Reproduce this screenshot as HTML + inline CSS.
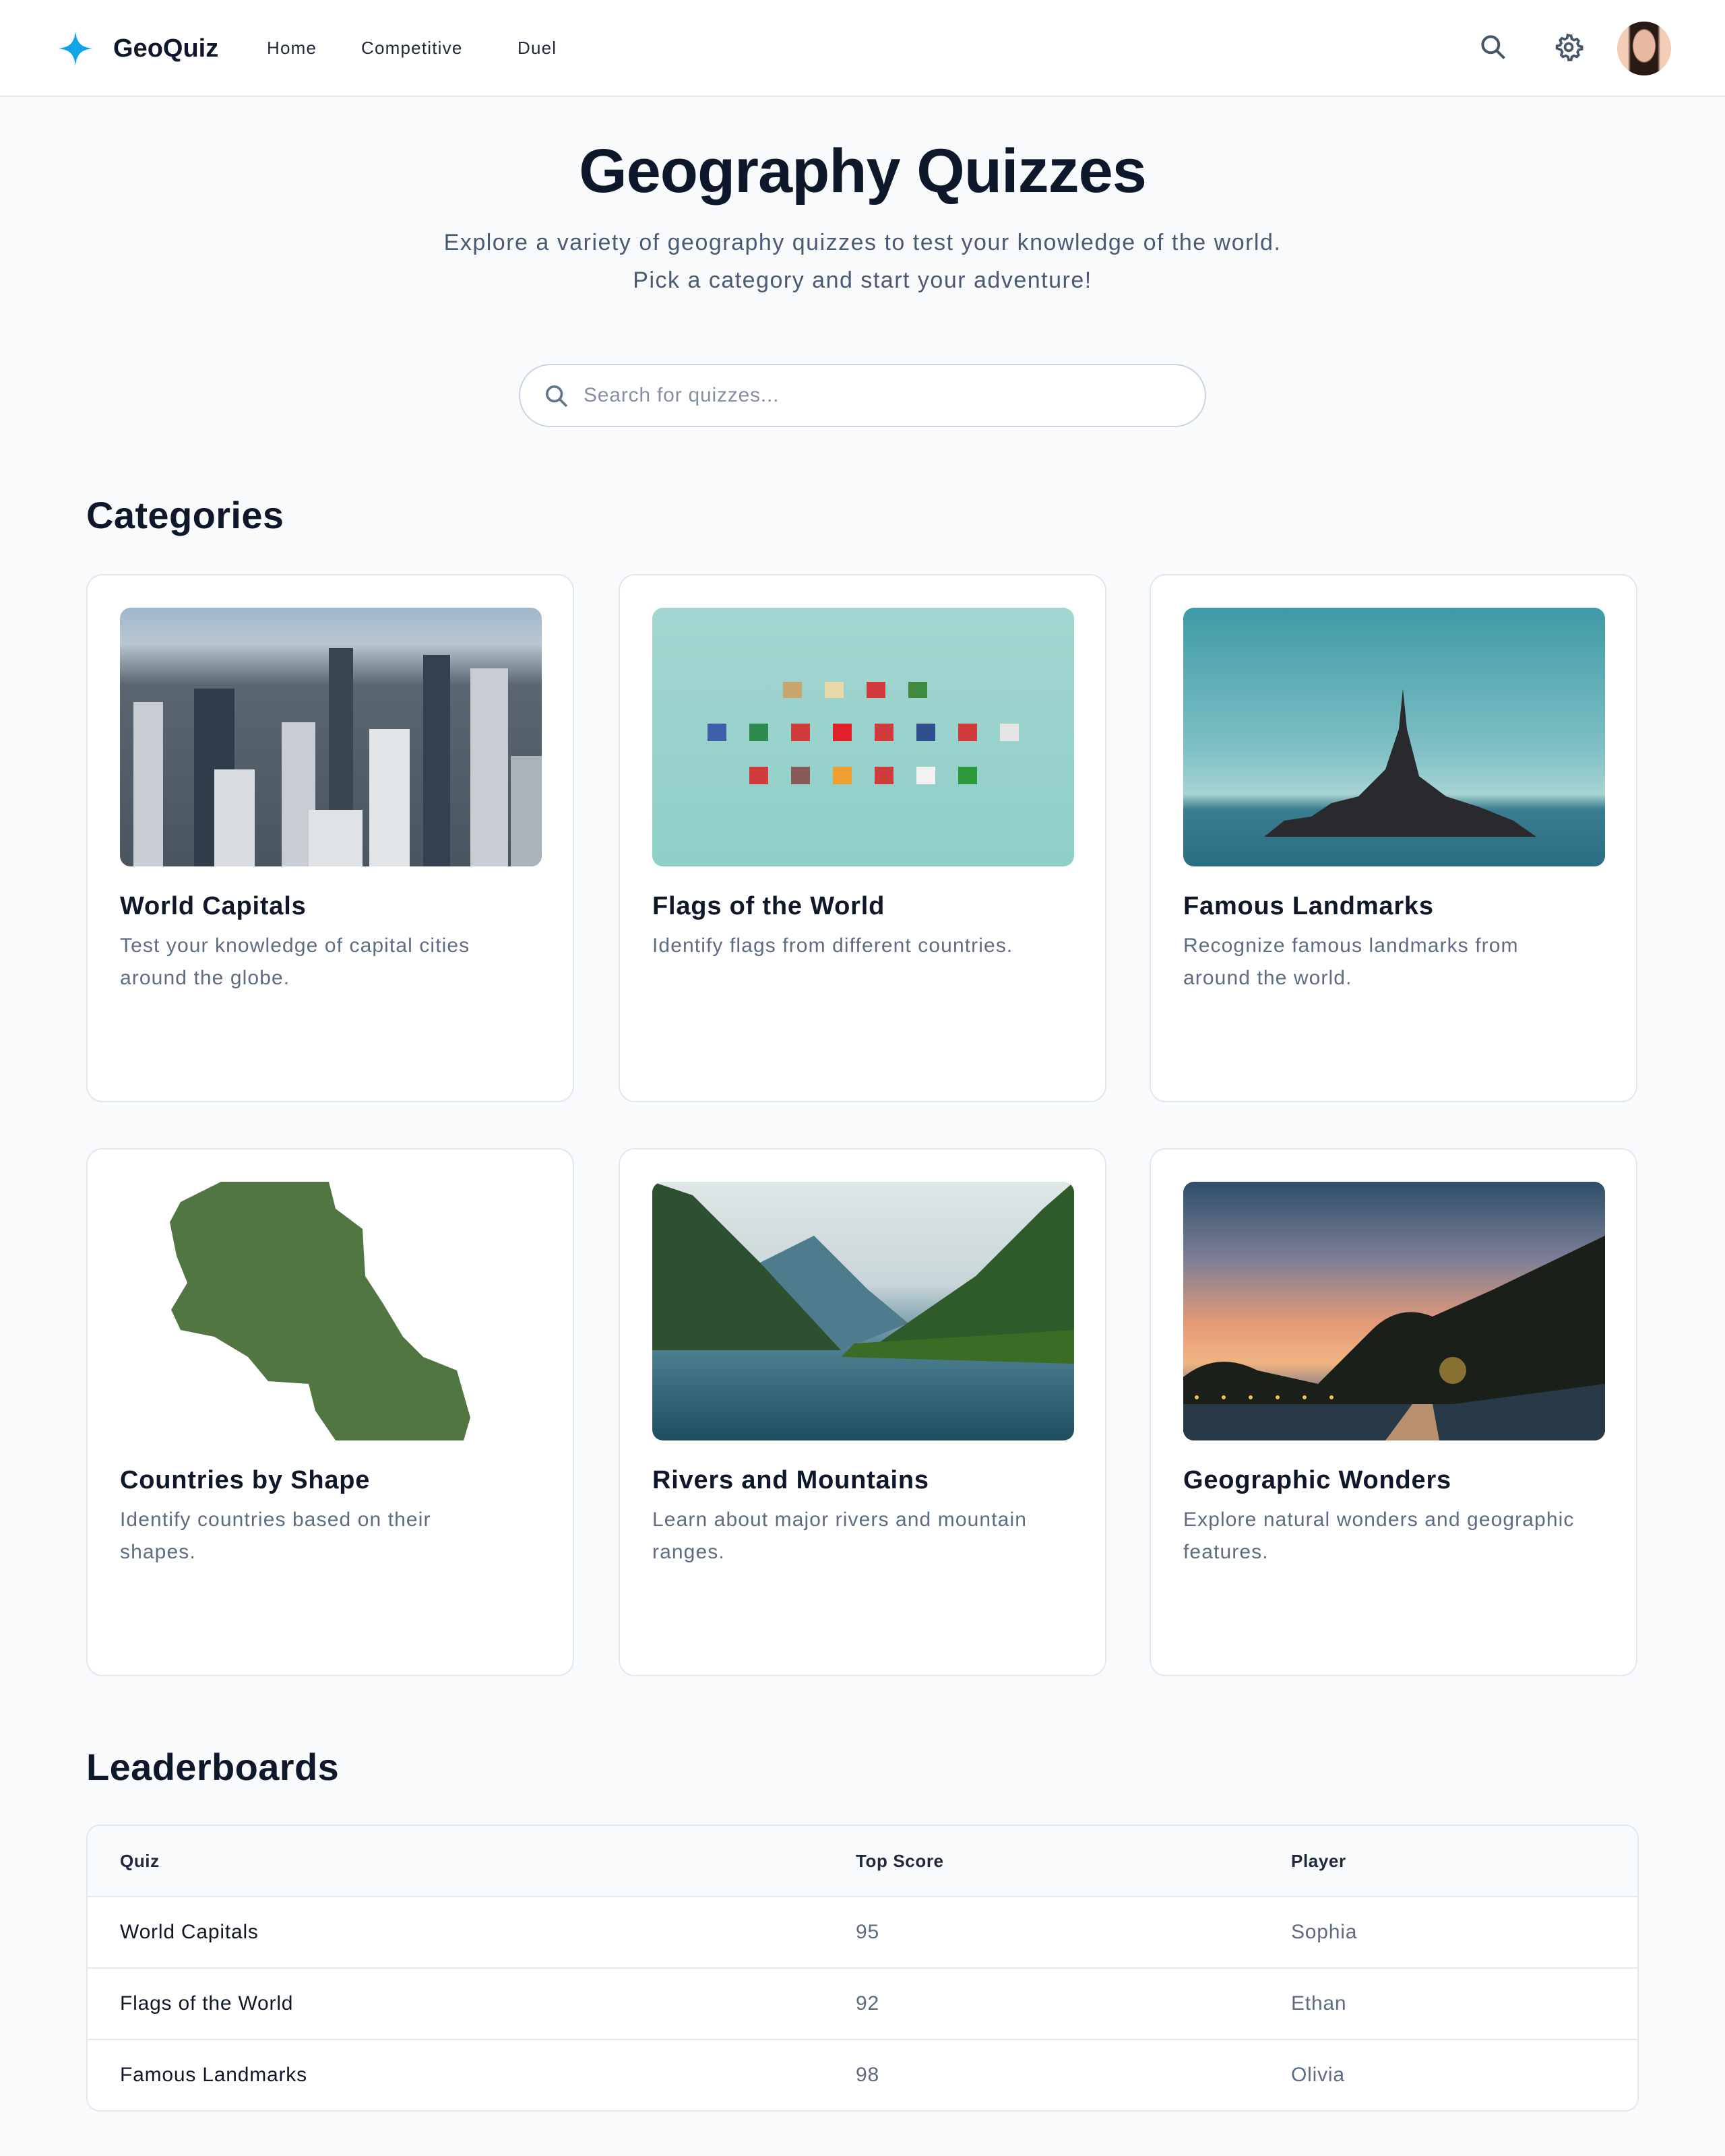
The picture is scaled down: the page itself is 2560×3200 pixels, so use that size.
<!DOCTYPE html>
<html><head><meta charset="utf-8">
<style>
html{zoom:2}
*{box-sizing:border-box;margin:0;padding:0}
body{width:1280px;height:1600px;overflow:hidden;background:#f8fafc;font-family:"Liberation Sans",sans-serif;color:#0f172a}
header{height:72px;background:#fff;border-bottom:1px solid #e2e8f0;position:relative}
.logo{position:absolute;left:42px;top:22px;display:flex;align-items:center}
.logo span{font-weight:700;font-size:19px;margin-left:14px;color:#0f172a}
nav{position:absolute;left:198px;top:28px;font-size:13px;color:#1e293b;letter-spacing:.6px}
nav a{position:absolute;white-space:nowrap}
.ic{position:absolute;top:24px}
.av{position:absolute;left:1200px;top:16px;width:40px;height:40px;border-radius:50%;background:radial-gradient(ellipse 22% 32% at 50% 45%,#e8b8a0 0 90%,transparent 100%),linear-gradient(90deg,#f3cdb6 0 20%,#2a1a16 25% 75%,#f3cdb6 80%)}
h1{position:absolute;top:101px;width:1280px;text-align:center;font-size:46px;font-weight:700;letter-spacing:-.5px}
.sub{position:absolute;top:166px;width:1280px;text-align:center;font-size:17px;line-height:28px;color:#4b5a73;letter-spacing:.75px}
.search{position:absolute;left:385px;top:270px;width:510px;height:47px;border:1px solid #cbd5e1;border-radius:24px;background:#fff}
.search span{position:absolute;left:47px;top:14px;font-size:15px;color:#8391a7;letter-spacing:.4px}
h2{position:absolute;left:64px;font-size:28px;font-weight:700;letter-spacing:.2px}
.card{position:absolute;width:362px;height:392px;background:#fff;border:1px solid #e2e8f0;border-radius:12px}
.img{position:absolute;left:24px;top:24px;width:313px;height:192px;border-radius:8px;overflow:hidden}
.card h3{position:absolute;left:24px;top:235px;font-size:19px;font-weight:700;color:#0f172a;letter-spacing:.4px}
.card p{position:absolute;left:24px;top:263px;width:285px;font-size:15px;line-height:24px;color:#5d6b84;letter-spacing:.55px}
table{position:absolute;left:64px;top:1354px;width:1152px;border:1px solid #e2e8f0;border-radius:10px;border-collapse:separate;border-spacing:0;background:#fff;overflow:hidden}
th{background:#f8fafc;height:52px;text-align:left;font-size:13px;font-weight:700;color:#1e293b;padding-left:24px;letter-spacing:.3px}
td{height:53px;border-top:1px solid #e2e8f0;padding-left:24px;font-size:15px;color:#5d6b84;letter-spacing:.4px}
td:first-child{color:#0f172a}
</style></head><body>
<header>
<div class="logo"><svg width="28" height="28" viewBox="0 0 28 28"><path d="M14 1 C15 10 18 13 27 14 C18 15 15 18 14 27 C13 18 10 15 1 14 C10 13 13 10 14 1Z" fill="#0ea5e9"/></svg><span>GeoQuiz</span></div>
<nav><a style="left:0">Home</a><a style="left:70px">Competitive</a><a style="left:186px">Duel</a></nav>
<svg class="ic" style="left:1097px" width="22" height="22" viewBox="0 0 24 24" fill="none" stroke="#475569" stroke-width="2.2"><circle cx="10" cy="10" r="6.5"/><path d="M15 15l6 6"/></svg>
<svg class="ic" style="left:1153px" width="22" height="22" viewBox="0 0 24 24" fill="none" stroke="#475569" stroke-width="2"><circle cx="12" cy="12" r="3"/><path d="M12 2.5l2 .3.5 2.5 1.8 1 2.4-.9 1.4 1.5-.9 2.4 1 1.8 2.5.5v2l-2.5.5-1 1.8.9 2.4-1.4 1.5-2.4-.9-1.8 1-.5 2.5h-2l-.5-2.5-1.8-1-2.4.9-1.4-1.5.9-2.4-1-1.8L2.5 13v-2l2.5-.5 1-1.8-.9-2.4 1.4-1.5 2.4.9 1.8-1 .5-2.5z"/></svg>
<div class="av"></div>
</header>
<h1>Geography Quizzes</h1>
<div class="sub">Explore a variety of geography quizzes to test your knowledge of the world.<br>Pick a category and start your adventure!</div>
<div class="search"><svg style="position:absolute;left:17px;top:13px" width="20" height="20" viewBox="0 0 24 24" fill="none" stroke="#64748b" stroke-width="2.2"><circle cx="10" cy="10" r="6.5"/><path d="M15 15l6 6"/></svg><span>Search for quizzes...</span></div>
<h2 style="top:366px">Categories</h2>

<div class="card" style="left:64px;top:426px"><div class="img" style="background:linear-gradient(#9fb8cc 0,#b8c6d0 14%,#5a6570 30%,#4b5560 100%)">
<svg width="313" height="192"><g fill="#c7cdd2"><rect x="10" y="70" width="22" height="122"/><rect x="55" y="60" width="30" height="132" fill="#2f3d4a"/><rect x="120" y="85" width="25" height="107"/><rect x="155" y="30" width="18" height="162" fill="#3a4552"/><rect x="185" y="90" width="30" height="102" fill="#e2e5e8"/><rect x="225" y="35" width="20" height="157" fill="#334050"/><rect x="260" y="45" width="28" height="147"/><rect x="70" y="120" width="30" height="72" fill="#d9dde1"/><rect x="140" y="150" width="40" height="42" fill="#e0e3e6"/><rect x="290" y="110" width="23" height="82" fill="#aab2ba"/></g></svg></div>
<h3>World Capitals</h3><p>Test your knowledge of capital cities around the globe.</p></div>

<div class="card" style="left:459px;top:426px"><div class="img" style="background:linear-gradient(#a3d6d0,#8ecfc7)">
<svg width="313" height="192"><g fill="#d23b3b"><rect x="97" y="55" width="14" height="12" fill="#c9a56b"/><rect x="128" y="55" width="14" height="12" fill="#e8d9a8"/><rect x="159" y="55" width="14" height="12"/><rect x="190" y="55" width="14" height="12" fill="#3f8a3f"/>
<rect x="41" y="86" width="14" height="13" fill="#3f5fa8"/><rect x="72" y="86" width="14" height="13" fill="#2d8a4e"/><rect x="103" y="86" width="14" height="13"/><rect x="134" y="86" width="14" height="13" fill="#e0202a"/><rect x="165" y="86" width="14" height="13"/><rect x="196" y="86" width="14" height="13" fill="#2f4f8f"/><rect x="227" y="86" width="14" height="13"/><rect x="258" y="86" width="14" height="13" fill="#e6e6e6"/>
<rect x="72" y="118" width="14" height="13"/><rect x="103" y="118" width="14" height="13" fill="#8a5a5a"/><rect x="134" y="118" width="14" height="13" fill="#f0a030"/><rect x="165" y="118" width="14" height="13"/><rect x="196" y="118" width="14" height="13" fill="#f2f2f2"/><rect x="227" y="118" width="14" height="13" fill="#2a9a3a"/></g></svg></div>
<h3>Flags of the World</h3><p>Identify flags from different countries.</p></div>

<div class="card" style="left:853px;top:426px"><div class="img" style="background:linear-gradient(#3f9aa6 0,#7fc0c5 55%,#a8d3d2 72%,#3a7d90 78%,#2b6d83 100%)">
<svg width="313" height="192"><path d="M60 170 L75 158 L95 155 L110 145 L130 140 L150 120 L160 90 L163 60 L166 90 L175 125 L195 140 L220 148 L245 158 L262 170 Z" fill="#2a2a2e"/></svg></div>
<h3>Famous Landmarks</h3><p>Recognize famous landmarks from around the world.</p></div>

<div class="card" style="left:64px;top:852px"><div class="img" style="background:#fff">
<svg width="313" height="192"><path d="M45 15 L75 0 L155 0 L160 20 L180 35 L182 70 L195 90 L210 115 L225 130 L250 140 L260 175 L255 192 L160 192 L145 170 L140 150 L110 148 L95 130 L70 115 L45 110 L38 95 L50 75 L42 55 L37 30 Z" fill="#527642"/></svg></div>
<h3>Countries by Shape</h3><p>Identify countries based on their shapes.</p></div>

<div class="card" style="left:459px;top:852px"><div class="img" style="background:linear-gradient(#dfe6e6 0,#c8d5d8 40%,#4c7f90 65%,#1f4d60 100%)">
<svg width="313" height="192"><path d="M0 0 L30 10 L90 70 L140 125 L0 125Z" fill="#2d5030"/><path d="M80 60 L120 40 L160 80 L190 105 L140 125Z" fill="#4f7c8c"/><path d="M313 0 L290 20 L240 70 L160 125 L313 130Z" fill="#2f5a2a"/><path d="M150 120 L313 110 L313 135 L140 130Z" fill="#3b6b25"/></svg></div>
<h3>Rivers and Mountains</h3><p>Learn about major rivers and mountain ranges.</p></div>

<div class="card" style="left:853px;top:852px"><div class="img" style="background:linear-gradient(#2e4e6a 0,#7d7f96 30%,#e59a78 55%,#f0b482 70%,#5a6a88 85%,#1c2a38 100%)">
<svg width="313" height="192"><path d="M0 145 Q25 125 55 140 L100 150 L140 110 Q160 90 185 100 L230 80 L313 40 L313 192 L0 192Z" fill="#1a1f1a"/><path d="M0 165 L200 165 L313 150 L313 192 L0 192Z" fill="#283a48"/><path d="M150 192 L170 165 L185 165 L190 192Z" fill="#b89070"/><g fill="#f5c04a"><circle cx="10" cy="160" r="1.5"/><circle cx="30" cy="160" r="1.5"/><circle cx="50" cy="160" r="1.5"/><circle cx="70" cy="160" r="1.5"/><circle cx="90" cy="160" r="1.5"/><circle cx="110" cy="160" r="1.5"/><circle cx="200" cy="140" r="10" opacity=".5"/></g></svg></div>
<h3>Geographic Wonders</h3><p style="width:310px">Explore natural wonders and geographic features.</p></div>

<h2 style="top:1295px">Leaderboards</h2>
<table>
<tr><th style="width:546px">Quiz</th><th style="width:323px">Top Score</th><th>Player</th></tr>
<tr><td>World Capitals</td><td>95</td><td>Sophia</td></tr>
<tr><td>Flags of the World</td><td>92</td><td>Ethan</td></tr>
<tr><td>Famous Landmarks</td><td>98</td><td>Olivia</td></tr>
</table>
</body></html>
